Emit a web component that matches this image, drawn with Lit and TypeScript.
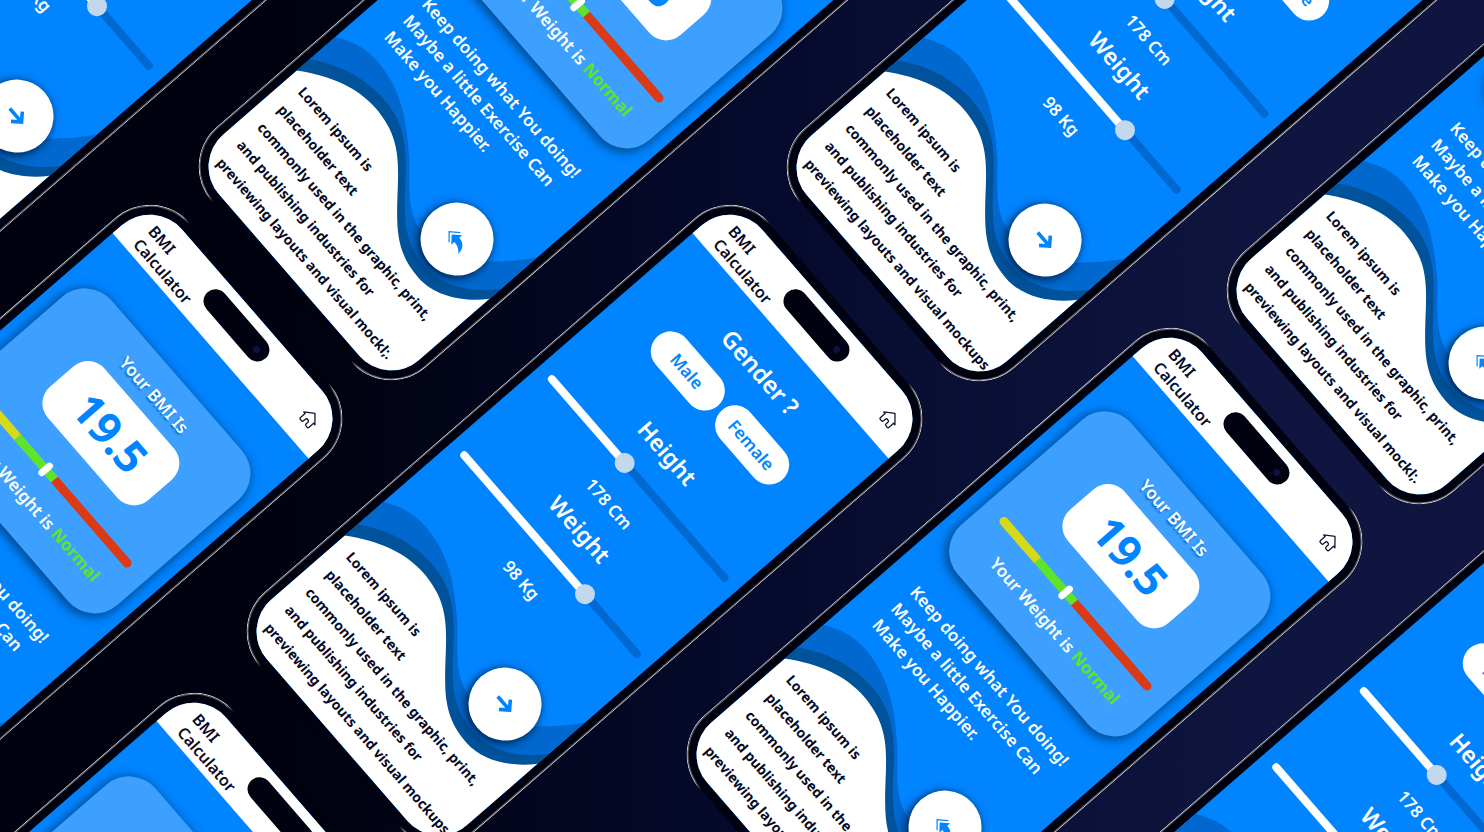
import { LitElement, html, css } from "lit";
import { customElement, property, state } from "lit/decorators.js";

type Kind = "form" | "result";
interface Placement { x: number; y: number; kind: Kind; }

/* Top-left corner of every screen, measured from the middle of the board. */
const PHONES: Placement[] = [
  { x: -496, y: -807, kind: "form" },
  { x: -56, y: -684, kind: "result" },
  { x: 532, y: -683, kind: "form" },
  { x: 972, y: -560, kind: "result" },
  { x: -588, y: -219, kind: "result" },
  { x: -8, y: -219, kind: "form" },
  { x: 432, y: -96, kind: "result" },
  { x: 804, y: 93, kind: "form" },
  { x: -544, y: 269, kind: "result" },
];

const sans = css`"Noto Sans", "Open Sans", sans-serif`;

@customElement("phone-screen")
export class PhoneScreen extends LitElement {
  @property() kind: Kind = "form";
  @state() private height = 178;
  @state() private weight = 98;

  static styles = css`
    :host { display: block; width: 299px; height: 656px; position: relative; font-family: ${sans}; color: #fff; }
    * { box-sizing: border-box; }
    h1, h2, p { margin: 0; }
    button { border: 0; padding: 0; font-family: inherit; cursor: pointer; }
    .body { position: absolute; inset: -9px; border-radius: 52px; background: #01020f; }
    .rim { position: absolute; inset: -10px; border-radius: 53px; border: 1px solid #d4d6da;
      box-shadow: inset 0 0 0 1px #5b5c60;
      mask-image: linear-gradient(90deg, #000 44px, transparent 54px, transparent calc(100% - 54px), #000 calc(100% - 44px)); }
    .screen { position: relative; height: 100%; border-radius: 43px; overflow: hidden; background: #0084ff;
      display: flex; flex-direction: column; }
    .bar { flex: none; height: 55px; background: #fff; color: #050a26; padding: 0 20px 0 22px;
      display: grid; grid-template-columns: 1fr 88px 1fr; align-items: center; }
    .bar h1 { font-size: 16px; line-height: 20px; font-weight: 600; padding-top: 8px; }
    .island { height: 24px; border-radius: 12px; background: #01020f; margin-bottom: 11px; padding-right: 9px;
      display: flex; align-items: center; justify-content: flex-end; }
    .lens { width: 7px; height: 7px; border-radius: 50%; background: #0c1245; }
    .home { justify-self: end; width: 20px; height: 20px; background: none; color: #111632; }
    .home svg { display: block; width: 20px; height: 20px; }
    .content { flex: 1; display: flex; flex-direction: column; align-items: center; }
    .form { padding: 22px 14px 0; }
    h2 { font-size: 24px; line-height: 36px; font-weight: 600; }
    .choices { display: flex; gap: 6px; margin: 16px 0 31px; }
    .choice { width: 92px; height: 40px; border-radius: 20px; background: #fff; color: #0084ff; font-size: 17px; font-weight: 600; }
    .name { font-size: 23px; }
    .range { appearance: none; width: 100%; height: 20px; margin: 11px 0 12px; background: none; }
    .range::-webkit-slider-runnable-track { height: 8px; border-radius: 4px;
      background: linear-gradient(90deg, #fff var(--fill), #0068cf var(--fill)); }
    .range::-webkit-slider-thumb { appearance: none; width: 20px; height: 20px; margin-top: -6px; border-radius: 50%; background: #c3d8ec; }
    .value { font-size: 17px; line-height: 34px; font-weight: 600; margin-bottom: 3px; }
    .card { width: 269px; height: 230px; margin-top: 45px; padding: 17px 22px 0; border-radius: 35px; background: #3da0ff;
      box-shadow: 0 3px 10px 2px #004d96; display: flex; flex-direction: column; align-items: center; }
    .label { font-size: 17px; line-height: 26px; font-weight: 600; text-shadow: 0 2px 2px #0068cf; }
    .score { width: 150px; height: 75px; margin-top: 7px; border-radius: 22px; background: #fff; color: #0084ff;
      font-size: 44px; line-height: 75px; font-weight: 700; text-align: center; }
    .scale { width: 227px; height: 17px; margin: 27px 0 12px; display: grid; grid-template-columns: 56fr 56fr 115fr; align-items: center; position: relative; }
    .seg { height: 9px; }
    .low { background: #d5d91a; border-radius: 5px 0 0 5px; }
    .ok { background: #5fe32b; }
    .high { background: #db3a17; border-radius: 0 5px 5px 0; }
    .mark { position: absolute; width: 7px; height: 17px; border-radius: 4px; background: #fff; }
    .verdict { font-size: 17px; line-height: 26px; font-weight: 600; white-space: nowrap; padding-left: 14px; }
    .verdict b { font-weight: 700; color: #5fe32b; }
    .advice { align-self: stretch; margin-top: 30px; padding-left: 32px; font-size: 17px; line-height: 25px; font-weight: 600; white-space: pre-line; }
    .wave { position: absolute; left: 0; bottom: 0; width: 100%; height: 208px; }
    .note { position: absolute; left: 17px; bottom: 10px; color: #050a26; font-size: 14px; line-height: 27px; font-weight: 700; white-space: pre; }
    .go { position: absolute; right: 30px; bottom: 114px; width: 73px; height: 73px; border-radius: 50%; background: #fff; color: #0084ff;
      box-shadow: 0 3px 8px 1px #00264f; display: grid; place-items: center; }
    .go svg { width: 28px; height: 28px; }
  `;

  private slider(id: string, name: string, unit: string, value: number, min: number, max: number, set: (v: number) => void) {
    const ratio = (value - min) / (max - min);
    return html`
      <h2 class="name"><label for=${id}>${name}</label></h2>
      <input class="range" id=${id} type="range" min=${min} max=${max} .value=${String(value)}
        style="--fill:${Math.round(ratio * 100)}%"
        @input=${(e: Event) => set(Number((e.target as HTMLInputElement).value))} />
      <p class="value">${value} ${unit}</p>`;
  }

  private form() {
    return html`<div class="content form">
      <h2>Gender ?</h2>
      <div class="choices"><button class="choice">Male</button><button class="choice">Female</button></div>
      ${this.slider("height", "Height", "Cm", this.height, 136, 236, (v) => (this.height = v))}
      ${this.slider("weight", "Weight", "Kg", this.weight, 27, 127, (v) => (this.weight = v))}
    </div>`;
  }

  private result() {
    return html`<div class="content">
      <section class="card">
        <p class="label">Your BMI Is</p>
        <p class="score">19.5</p>
        <div class="scale"><i class="seg low"></i><i class="seg ok"></i><i class="seg high"></i><i class="mark" style="left:42%"></i></div>
        <p class="verdict">Your Weight is <b>Normal</b></p>
      </section>
      <p class="advice">Keep doing what You doing!
Maybe a little Exercise Can
Make you Happier.</p>
    </div>`;
  }

  render() {
    const form = this.kind === "form";
    const lines = ["Lorem ipsum is", "placeholder text", "commonly used in the graphic, print,",
      "and publishing industries for", form ? "previewing layouts and visual mockups" : "previewing layouts and visual mockl;."];
    return html`
      <div class="body"></div><div class="rim"></div>
      <div class="screen">
        <header class="bar">
          <h1>BMI Calculator</h1>
          <div class="island"><i class="lens"></i></div>
          <button class="home" aria-label="Home"><svg viewBox="0 0 20 20" fill="none" stroke="currentColor" stroke-width="1.3" stroke-linejoin="round">
            <path d="M3.500 10H1.500L10 2.500 18.500 10h-2v6q0 1.500-1.500 1.500h-1.500q-1.500 0-1.500-1.500v-2.500q0-1.500-2-1.500t-2 1.500V16q0 1.500-1.500 1.500H5q-1.500 0-1.500-1.500z"/></svg></button>
        </header>
        ${form ? this.form() : this.result()}
        <svg class="wave" viewBox="0 448 299 208" preserveAspectRatio="none">
          <path fill="#0068cf" d="M0 465C18 452 32 449 46 449C85 449 113 468 141 489C160 505 175 523 200 527C240 530 270 505 299 457V656H0Z"/>
          <path fill="#00529b" d="M0 499C25 479 50 469 80 469C115 469 135 487 165 516C188 537 205 548 232 548C260 548 284 528 299 505V656H0Z"/>
          <path fill="#fff" d="M0 516C27 493 54 481 80 481C120 481 137 500 165 526C188 547 205 560 236 560C262 560 285 541 299 520V656H0Z"/>
        </svg>
        <p class="note">${lines.join("\n")}</p>
        <button class="go" aria-label=${form ? "Next" : "Back"}>${form
          ? html`<svg viewBox="0 0 28 28" fill="none" stroke="currentColor" stroke-width="3.600"><path d="M3 14h17M13.500 6.500l7.500 7.500-7.500 7.500"/></svg>`
          : html`<svg viewBox="0 0 28 28"><path fill="currentColor" d="M6.500 14.500 14 7v4C21 11 25 15 25.500 22.500 23 19 19 17.500 14 17.500V21.500z"/><path fill="none" stroke="currentColor" stroke-width="1.200" d="M10.700 6.700 2.600 14.500l8 7"/></svg>`}</button>
      </div>`;
  }
}

@customElement("app-root")
export class AppRoot extends LitElement {
  static styles = css`
    :host { display: block; }
    .board { position: relative; min-height: 100vh; overflow: hidden;
      background: linear-gradient(90deg, #01020f 0%, #01020f 20%, #050a2c 50%, #10153f 85%, #10153f 100%); }
    .phone { position: absolute; transform-origin: 0 0; transform: rotate(49deg); }
  `;

  render() {
    return html`<main class="board">
      ${PHONES.map((p) => html`<phone-screen class="phone" .kind=${p.kind}
        style="left:calc(50% + ${p.x}px);top:calc(50% + ${p.y}px)"></phone-screen>`)}
    </main>`;
  }
}
